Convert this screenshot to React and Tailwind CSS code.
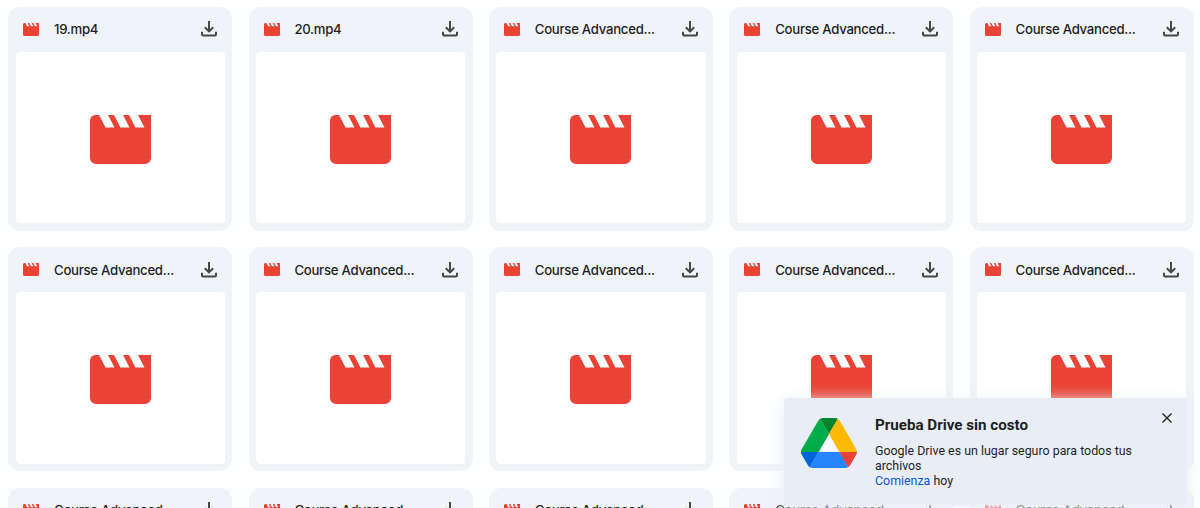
import React from 'react';

const rows = [
  ['19.mp4', '20.mp4', 'Course Advanced...', 'Course Advanced...', 'Course Advanced...'],
  ['Course Advanced...', 'Course Advanced...', 'Course Advanced...', 'Course Advanced...', 'Course Advanced...'],
  ['Course Advanced...', 'Course Advanced...', 'Course Advanced...', 'Course Advanced...', 'Course Advanced...'],
];

const VideoIcon = ({ className }) => (
  <svg viewBox="0 0 61 49" className={className} fill="#ea4335" preserveAspectRatio="none">
    <path d="M5 0H9L15.5 12.5H24.5L18 0H24L30.5 12.5H39.5L33 0H39L45.5 12.5H54.5L48 0H61V43A6 6 0 0 1 55 49H6A6 6 0 0 1 0 43V6Q0 1 5 0Z" />
  </svg>
);

const DownloadIcon = () => (
  <svg viewBox="0 0 16 16" className="h-4 w-4 shrink-0" fill="none" stroke="#444746" strokeWidth="2">
    <path d="M8 0V10.5M3.8 6.2L8 10.4L12.2 6.2M1 10.8V13.5Q1 14.6 2.1 14.6H13.9Q15 14.6 15 13.5V10.8" />
  </svg>
);

const DriveLogo = () => (
  <svg viewBox="0 0 87.3 78" className="mt-5 ml-[17px] h-[50px] w-14 shrink-0">
    <path d="M43.65 25L27.5 53H59.8Z" fill="#fafbfd" />
    <path d="m6.6 66.85 3.85 6.65c.8 1.4 1.95 2.5 3.3 3.3l13.75-23.8h-27.5c0 1.55.4 3.1 1.2 4.5z" fill="#0066da" />
    <path d="m43.65 25-13.75-23.8c-1.35.8-2.5 1.9-3.3 3.3l-25.4 44a9.06 9.06 0 0 0 -1.2 4.5h27.5z" fill="#00ac47" />
    <path d="m73.55 76.8c1.35-.8 2.5-1.9 3.3-3.3l1.6-2.75 7.65-13.25c.8-1.4 1.2-2.95 1.2-4.5h-27.502l5.852 11.5z" fill="#ea4335" />
    <path d="m43.65 25 13.75-23.8c-1.35-.8-2.9-1.2-4.5-1.2h-18.5c-1.6 0-3.15.45-4.5 1.2z" fill="#00832d" />
    <path d="m59.8 53h-32.3l-13.75 23.8c1.35.8 2.9 1.2 4.5 1.2h50.8c1.6 0 3.15-.45 4.5-1.2z" fill="#2684fc" />
    <path d="m73.4 26.5-12.7-22c-.8-1.4-1.95-2.5-3.3-3.3l-13.75 23.8 16.15 28h27.45c0-1.55-.4-3.1-1.2-4.5z" fill="#ffba00" />
  </svg>
);

const FileCard = ({ name }) => (
  <div className="flex h-[224px] flex-col rounded-xl bg-[#f0f4f9] px-[7.5px] pb-[7.5px]">
    <div className="flex h-[45px] shrink-0 items-center px-[7.5px]">
      <VideoIcon className="h-[13px] w-4 shrink-0" />
      <span className="ml-[14.8px] flex-1 whitespace-nowrap text-[13.2px] leading-5 font-medium tracking-[-0.28px] text-[#1f1f1f]">{name}</span>
      <DownloadIcon />
    </div>
    <div className="flex flex-1 items-center justify-center rounded bg-white pt-[3.5px]">
      <VideoIcon className="h-[49px] w-[61px]" />
    </div>
  </div>
);

const Toast = () => (
  <div className="absolute top-[398px] left-[784px] flex h-[107px] w-[403px] rounded-t bg-[#e9eef6] font-[Roboto,sans-serif] text-[#1f1f1f] shadow-[0_3px_14px_3px_rgba(234,239,246,0.8)]">
    <DriveLogo />
    <div className="mt-[18px] ml-[18px] w-[270px]">
      <h2 className="text-[15.2px] leading-[18px] font-bold tracking-[-0.02px]">Prueba Drive sin costo</h2>
      <p className="mt-[9px] text-[12.4px] leading-[15px]">
        Google Drive es un lugar seguro para todos tus archivos<br />
        <a className="text-[#0b57d0]">Comienza</a> hoy
      </p>
    </div>
    <svg viewBox="0 0 10 10" className="mt-[15px] ml-[17px] h-[10px] w-[10px]" stroke="#1f1f1f" strokeWidth="1.3">
      <path d="M.5 .5L9.5 9.5M9.5 .5L.5 9.5" />
    </svg>
  </div>
);

export default function App() {
  return (
    <div className="relative h-[508px] w-[1200px] overflow-hidden bg-white font-[Inter,sans-serif]">
      <div className="grid grid-cols-5 gap-x-[16.4px] gap-y-[16.5px] pt-[6.6px] pr-[6.2px] pl-[8.2px]">
        {rows.flat().map((name, i) => <FileCard key={i} name={name} />)}
      </div>
      <Toast />
    </div>
  );
}
